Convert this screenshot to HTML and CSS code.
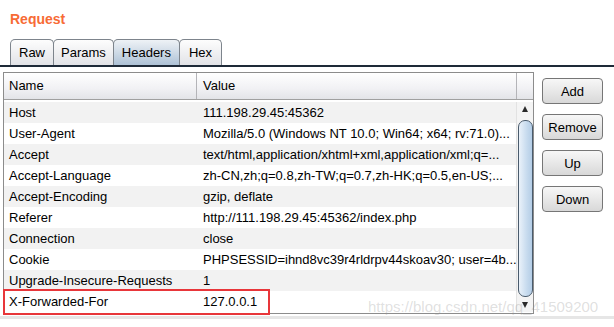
FILE: index.html
```html
<!DOCTYPE html>
<html lang="en">
<head>
    <meta charset="UTF-8">
    <title>Request</title>
    <link rel="stylesheet" href="styles.css">
</head>
<body>
    <div class="title">Request</div>

    <div class="tabs">
        <div class="tab">Raw</div>
        <div class="tab">Params</div>
        <div class="tab active">Headers</div>
        <div class="tab hex">Hex</div>
    </div>

    <div class="panel">
        <div class="table">
            <div class="head">
                <div class="cell name">Name</div>
                <div class="cell value">Value</div>
                <div class="cell filler"></div>
            </div>
            <div class="body">
                <div class="rows">
                    <div class="row"><div class="cell name">Host</div><div class="cell value">111.198.29.45:45362</div></div>
                    <div class="row"><div class="cell name">User-Agent</div><div class="cell value">Mozilla/5.0 (Windows NT 10.0; Win64; x64; rv:71.0)...</div></div>
                    <div class="row"><div class="cell name">Accept</div><div class="cell value">text/html,application/xhtml+xml,application/xml;q=...</div></div>
                    <div class="row"><div class="cell name">Accept-Language</div><div class="cell value">zh-CN,zh;q=0.8,zh-TW;q=0.7,zh-HK;q=0.5,en-US;...</div></div>
                    <div class="row"><div class="cell name">Accept-Encoding</div><div class="cell value">gzip, deflate</div></div>
                    <div class="row"><div class="cell name">Referer</div><div class="cell value">http://111.198.29.45:45362/index.php</div></div>
                    <div class="row"><div class="cell name">Connection</div><div class="cell value">close</div></div>
                    <div class="row"><div class="cell name">Cookie</div><div class="cell value">PHPSESSID=ihnd8vc39r4rldrpv44skoav30; user=4b...</div></div>
                    <div class="row"><div class="cell name">Upgrade-Insecure-Requests</div><div class="cell value">1</div></div>
                    <div class="row marked"><div class="cell name">X-Forwarded-For</div><div class="cell value">127.0.0.1</div><span class="highlight"></span></div>
                </div>
                <div class="scrollbar">
                    <div class="arrow up"></div>
                    <div class="thumb"></div>
                    <div class="arrow down"></div>
                </div>
            </div>
        </div>

        <div class="actions">
            <button>Add</button>
            <button>Remove</button>
            <button>Up</button>
            <button>Down</button>
        </div>
    </div>

    <div class="footer"></div>

    <div class="watermark">https://blog.csdn.net/qq_41509200</div>
</body>
</html>
```

FILE: styles.css
```css
body {
    margin: 0;
    font-family: "Liberation Sans", Arial, sans-serif;
    font-size: 13px;
    color: #000;
    background: #fff;
    width: 614px;
    height: 327px;
    overflow: hidden;
    position: relative;
}
.title {
    margin: 10px 0 0 10px;
    font-size: 14px;
    line-height: 18px;
    font-weight: bold;
    color: #f76b35;
}
.tabs {
    display: flex;
    margin-top: 11px;
    padding-left: 10px;
    border-bottom: 2px solid #1e2a38;
}
.tab {
    height: 25px;
    line-height: 26px;
    padding: 0 7px;
    border: 1px solid #7d848c;
    border-bottom: none;
    border-radius: 5px 5px 0 0;
    margin-right: -1px;
    background: linear-gradient(#fdfdfd, #e2e3e7);
    font-size: 13px;
}
.tab:first-child {
    padding: 0 8px;
}
.tab.active {
    padding: 0 8px;
    background: linear-gradient(#eef2f6, #aec2d6);
}
.tab.hex {
    padding: 0 9px;
}
.panel {
    display: flex;
    margin: 5px 0 0 3px;
}
.table {
    width: 529px;
    border: 1px solid #8c8c8c;
    background: #fff;
}
.head {
    display: flex;
    height: 26px;
    border-bottom: 1px solid #a0a0a0;
    background: linear-gradient(#ffffff, #f1f1f4 60%, #e3e4e8);
}
.head .cell {
    line-height: 26px;
    border-right: 1px solid #b4b4b8;
}
.head .filler {
    width: 16px;
    border-right: none;
}
.cell {
    white-space: nowrap;
    overflow: hidden;
}
.name {
    width: 188px;
    padding-left: 5px;
    flex-shrink: 0;
}
.value {
    width: 313px;
    padding-left: 6px;
    flex-shrink: 0;
}
.head .name {
    width: 187px;
}
.body {
    display: flex;
    padding-top: 2px;
    padding-bottom: 1px;
}
.rows {
    width: 513px;
}
.row {
    display: flex;
    height: 21px;
    line-height: 21px;
    position: relative;
}
.row:nth-child(odd) {
    background: #f2f2f2;
}
.highlight {
    position: absolute;
    left: -1px;
    top: -2px;
    width: 263px;
    height: 22px;
    border: 2px solid #e8363a;
}
.scrollbar {
    width: 16px;
    display: flex;
    flex-direction: column;
    align-items: center;
    background: #f4f4f4;
    border-left: 1px solid #e2e2e2;
}
.arrow {
    width: 0;
    height: 0;
    border-left: 3px solid transparent;
    border-right: 3px solid transparent;
}
.arrow.up {
    margin: 4px 0 8px;
    border-bottom: 6px solid #2a2a2a;
}
.arrow.down {
    margin: 5px 0 4px;
    border-top: 6px solid #2a2a2a;
}
.thumb {
    flex: 1;
    width: 13px;
    margin-left: 1px;
    border: 1px solid #4a5b6c;
    border-radius: 7px;
    background: linear-gradient(90deg, #eaf2fa, #c7dbee 60%, #b4cde6);
}
.actions {
    display: flex;
    flex-direction: column;
    gap: 10px;
    margin: 6px 0 0 8px;
}
button {
    width: 61px;
    height: 26px;
    padding: 0;
    border: 1px solid #767676;
    border-radius: 4px;
    background: linear-gradient(#f7f7f7, #e8e8e8 50%, #d8d8d8);
    font-family: "Liberation Sans", Arial, sans-serif;
    font-size: 13px;
    color: #000;
}
.footer {
    margin-top: 2px;
    height: 3px;
    background: #e6e6e6;
}
.watermark {
    position: absolute;
    left: 368px;
    top: 298px;
    font-size: 15px;
    color: rgba(150, 150, 150, 0.3);
    white-space: nowrap;
}
```
